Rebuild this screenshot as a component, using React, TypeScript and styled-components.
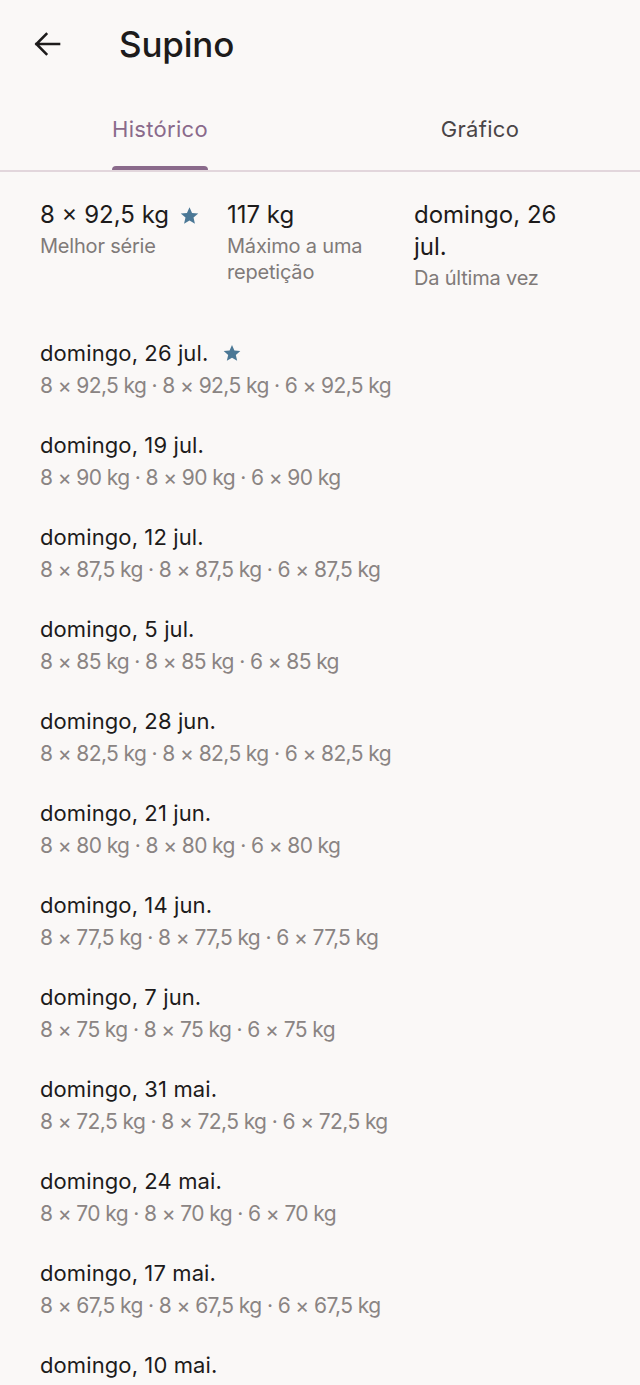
import React from 'react'
import styled, { createGlobalStyle } from 'styled-components'

const Global = createGlobalStyle`
  html, body { margin: 0; padding: 0; background: #faf8f7; }
  body { font-family: Inter, "Noto Sans", sans-serif; color: #1d1b1b; }
`

const Page = styled.div`
  width: 640px;
  min-height: 1385px;
  background: #faf8f7;
  overflow: hidden;
`

const TopBar = styled.header`
  height: 92px;
  display: flex;
  align-items: center;
  padding-left: 25px;
  padding-bottom: 4px;
  box-sizing: border-box;
  gap: 50px;
`

const BackButton = styled.button`
  width: 44px;
  height: 44px;
  border: 0;
  background: none;
  padding: 0;
  display: flex;
  align-items: center;
  justify-content: center;
  color: #1d1b1b;
`

const Title = styled.h1`
  margin: 0;
  font-size: 35px;
  font-weight: 500;
  letter-spacing: -0.2px;
`

const Tabs = styled.nav`
  display: grid;
  grid-template-columns: 1fr 1fr;
  border-bottom: 2px solid #e2d6dc;
  height: 78px;
`

const Tab = styled.div<{ $active?: boolean }>`
  display: flex;
  justify-content: center;
  font-size: 22px;
  font-weight: 400;
  letter-spacing: 0.3px;
  color: ${p => (p.$active ? '#8a6a8b' : '#4a4547')};
  & > span {
    position: relative;
    padding-top: 24px;
    height: 100%;
    box-sizing: border-box;
  }
  & > span::after {
    content: '';
    display: ${p => (p.$active ? 'block' : 'none')};
    position: absolute;
    left: 0;
    right: 0;
    bottom: 0;
    height: 4px;
    border-radius: 4px 4px 0 0;
    background: #8a6a8b;
  }
`

const Stats = styled.section`
  display: grid;
  grid-template-columns: 187px 187px 1fr;
  padding: 27px 40px 0;
`

const Stat = styled.div`
  display: flex;
  flex-direction: column;
`

const StatValue = styled.div`
  font-size: 24px;
  line-height: 32px;
  letter-spacing: 0;
  display: flex;
  align-items: center;
  gap: 10px;
  padding-right: 14px;
`

const StatLabel = styled.div`
  font-size: 20px;
  line-height: 26px;
  letter-spacing: -0.2px;
  color: #807a79;
  padding-right: 14px;
  padding-top: 2px;
`

const List = styled.ul`
  list-style: none;
  margin: 0;
  padding: 47px 40px 0;
  display: flex;
  flex-direction: column;
  gap: 29px;
`

const Entry = styled.li`
  display: flex;
  flex-direction: column;
  gap: 3px;
`

const EntryDate = styled.div`
  font-size: 22px;
  line-height: 30px;
  letter-spacing: 0.1px;
  display: flex;
  align-items: center;
  gap: 14px;
`

const EntrySets = styled.div`
  font-size: 21px;
  line-height: 30px;
  letter-spacing: -0.6px;
  color: #8a8483;
`

function Star({ size = 20 }: { size?: number }) {
  return (
    <svg width={size} height={size} viewBox="0 0 24 24" fill="#4b7896">
      <path d="M12 2.5l2.9 6.6 7.1.6-5.4 4.7 1.6 7-6.2-3.7-6.2 3.7 1.6-7L2 9.7l7.1-.6z" />
    </svg>
  )
}

const history = [
  { date: 'domingo, 26 jul.', w: '92,5', best: true },
  { date: 'domingo, 19 jul.', w: '90' },
  { date: 'domingo, 12 jul.', w: '87,5' },
  { date: 'domingo, 5 jul.', w: '85' },
  { date: 'domingo, 28 jun.', w: '82,5' },
  { date: 'domingo, 21 jun.', w: '80' },
  { date: 'domingo, 14 jun.', w: '77,5' },
  { date: 'domingo, 7 jun.', w: '75' },
  { date: 'domingo, 31 mai.', w: '72,5' },
  { date: 'domingo, 24 mai.', w: '70' },
  { date: 'domingo, 17 mai.', w: '67,5' },
  { date: 'domingo, 10 mai.', w: '65' },
]

export default function App() {
  return (
    <Page>
      <Global />
      <TopBar>
        <BackButton aria-label="Voltar">
          <svg width="34" height="34" viewBox="0 0 24 24" fill="none" stroke="#1d1b1b" strokeWidth="1.8" strokeLinecap="square">
            <path d="M20.5 12H4.5M11.5 5L4.5 12l7 7" />
          </svg>
        </BackButton>
        <Title>Supino</Title>
      </TopBar>
      <Tabs>
        <Tab $active><span>Histórico</span></Tab>
        <Tab><span>Gráfico</span></Tab>
      </Tabs>
      <Stats>
        <Stat>
          <StatValue>8 × 92,5 kg <Star size={21} /></StatValue>
          <StatLabel>Melhor série</StatLabel>
        </Stat>
        <Stat>
          <StatValue>117 kg</StatValue>
          <StatLabel>Máximo a uma repetição</StatLabel>
        </Stat>
        <Stat>
          <StatValue>domingo, 26 jul.</StatValue>
          <StatLabel>Da última vez</StatLabel>
        </Stat>
      </Stats>
      <List>
        {history.map(h => (
          <Entry key={h.date}>
            <EntryDate>
              {h.date}
              {h.best && <Star size={20} />}
            </EntryDate>
            <EntrySets>
              8 × {h.w} kg · 8 × {h.w} kg · 6 × {h.w} kg
            </EntrySets>
          </Entry>
        ))}
      </List>
    </Page>
  )
}
